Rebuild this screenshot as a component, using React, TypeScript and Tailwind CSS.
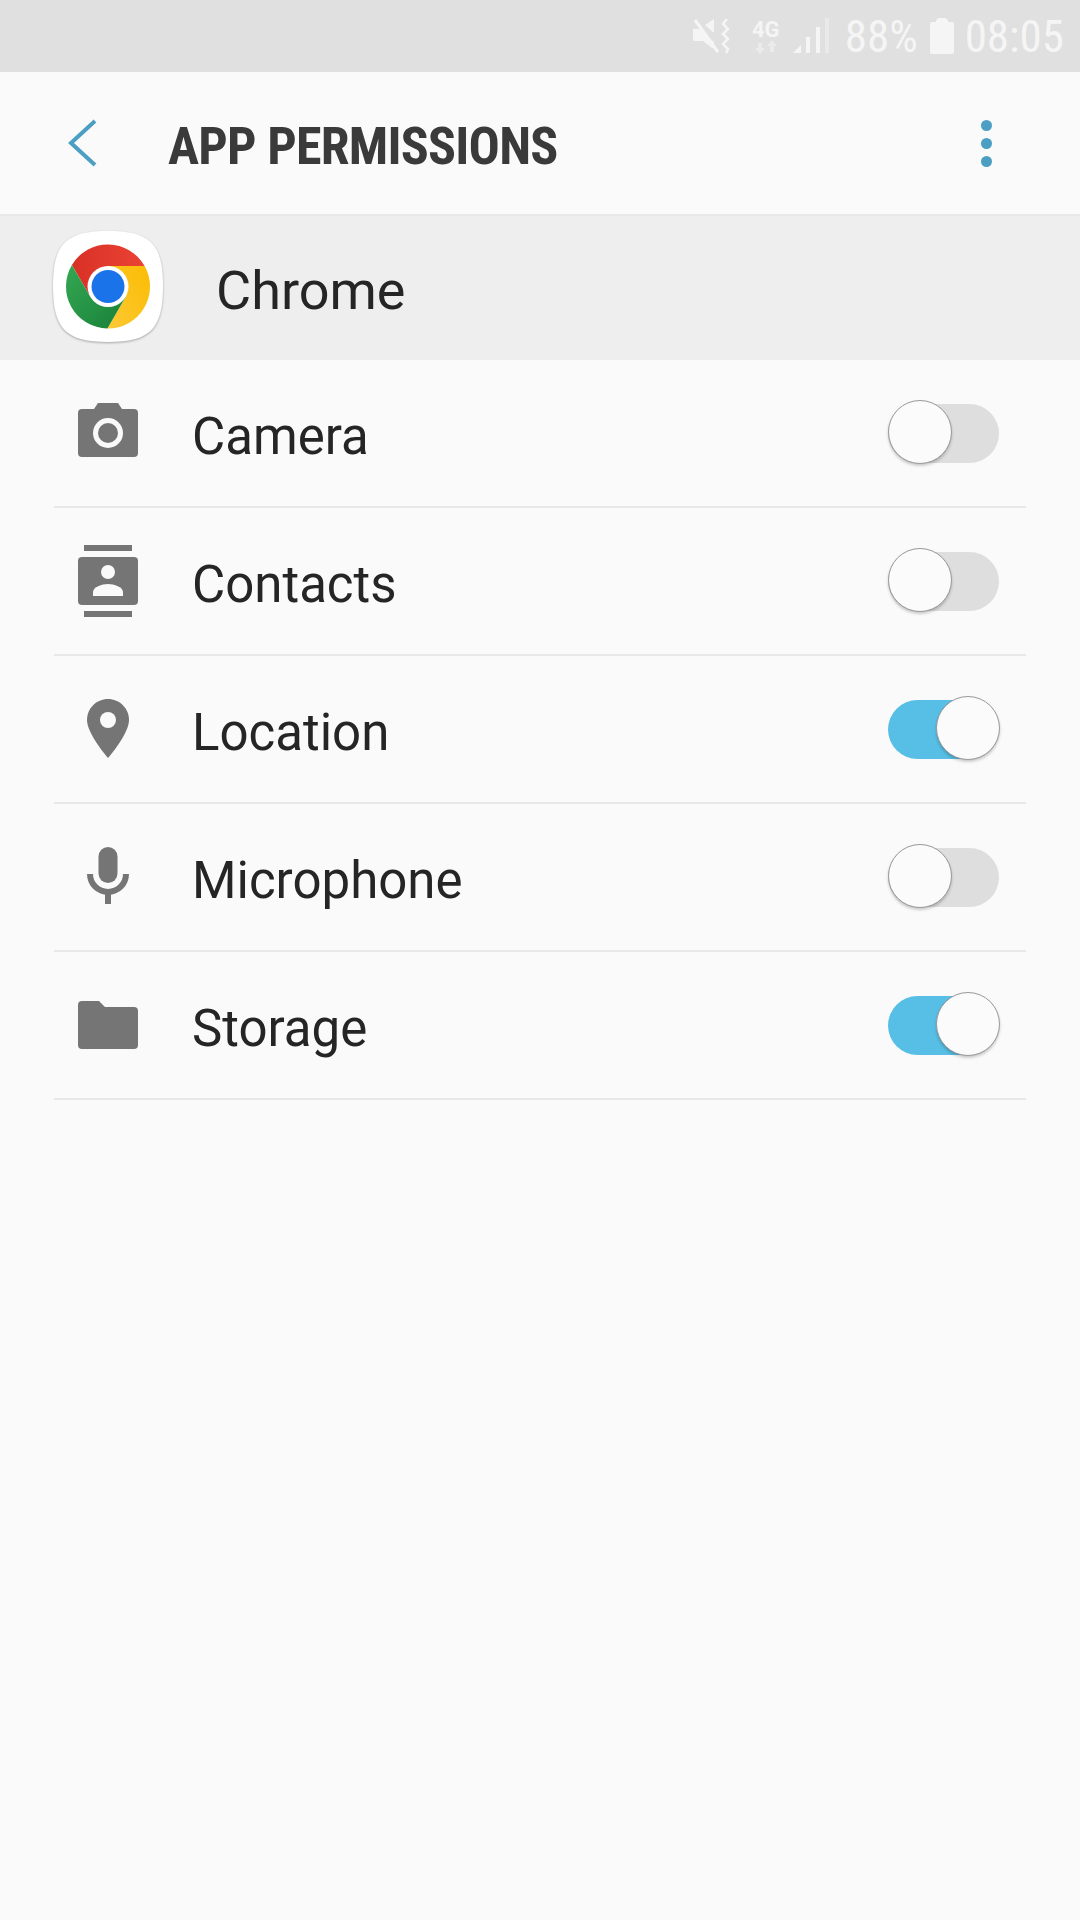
import React from "react";

const rows = [
  { label: "Camera", on: false, icon: <CameraIcon /> },
  { label: "Contacts", on: false, icon: <ContactsIcon /> },
  { label: "Location", on: true, icon: <LocationIcon /> },
  { label: "Microphone", on: false, icon: <MicIcon /> },
  { label: "Storage", on: true, icon: <FolderIcon /> },
];

function IconBox({ children }: { children: React.ReactNode }) {
  return (
    <svg width="60" height="72" viewBox="0 0 60 72" className="shrink-0 fill-[#757575]">
      {children}
    </svg>
  );
}

function CameraIcon() {
  return (
    <IconBox>
      <path d="M20 6H40L44 12H56a4 4 0 0 1 4 4V56a4 4 0 0 1-4 4H4a4 4 0 0 1-4-4V16a4 4 0 0 1 4-4H16Z" />
      <circle cx="30" cy="36" r="15" fill="#fafafa" />
      <circle cx="30" cy="36" r="10" />
    </IconBox>
  );
}

function ContactsIcon() {
  return (
    <IconBox>
      <rect x="6" y="0" width="48" height="6" />
      <rect x="6" y="66" width="48" height="6" />
      <rect x="0" y="12" width="60" height="48" rx="4" />
      <circle cx="30" cy="27" r="7" fill="#fafafa" />
      <path d="M15 51V47C15 42 24 39 30 39C36 39 45 42 45 47V51Z" fill="#fafafa" />
    </IconBox>
  );
}

function LocationIcon() {
  return (
    <IconBox>
      <path d="M30 6C18.4 6 9 15.4 9 27C9 41 30 65 30 65S51 41 51 27C51 15.4 41.6 6 30 6Z" />
      <circle cx="30" cy="27" r="8" fill="#fafafa" />
    </IconBox>
  );
}

function MicIcon() {
  return (
    <IconBox>
      <rect x="20.5" y="6" width="19" height="36" rx="9.5" />
      <path d="M12 33A18 18 0 0 0 48 33" fill="none" stroke="#757575" strokeWidth="6" />
      <rect x="27" y="50" width="6" height="13" />
    </IconBox>
  );
}

function FolderIcon() {
  return (
    <IconBox>
      <path d="M4 12H21L27 18H56a4 4 0 0 1 4 4V56a4 4 0 0 1-4 4H4a4 4 0 0 1-4-4V16a4 4 0 0 1 4-4Z" />
    </IconBox>
  );
}

function Toggle({ on }: { on: boolean }) {
  return (
    <div className="relative h-[59px] w-[111px]">
      <div className={`h-full w-full rounded-full ${on ? "bg-[#57bfe6]" : "bg-[#dedede]"}`} />
      <div
        className={`absolute top-[-4px] h-[64px] w-[64px] rounded-full border border-[#9a9a9a] bg-[#fbfbfb] shadow-[0_2px_3px_rgba(0,0,0,0.2)] ${
          on ? "left-[48px]" : "left-0"
        }`}
      />
    </div>
  );
}

function ChromeLogo() {
  return (
    <svg width="110" height="111" viewBox="0 0 110 111" className="mb-[3px] drop-shadow-[0_1px_1px_rgba(0,0,0,0.3)]">
      <defs>
        <linearGradient id="red" x1="0" y1="0" x2="1" y2="0">
          <stop offset="0" stopColor="#d93025" />
          <stop offset="1" stopColor="#ea4335" />
        </linearGradient>
        <linearGradient id="green" x1="1" y1="1" x2="0" y2="0">
          <stop offset="0" stopColor="#188038" />
          <stop offset="1" stopColor="#34a853" />
        </linearGradient>
        <linearGradient id="yellow" x1="0" y1="1" x2="1" y2="0">
          <stop offset="0" stopColor="#fcc934" />
          <stop offset="1" stopColor="#fbbc04" />
        </linearGradient>
      </defs>
      <path d="M55 0C97 0 110 13 110 55C110 98 97 111 55 111C13 111 0 98 0 55C0 13 13 0 55 0Z" fill="#fff" />
      <g transform="translate(55 55.5)">
        <path d="M-17.75 10.25L-36.08 -21.5A42 42 0 0 1 36.66 -20.5L0 -20.5Z" fill="url(#red)" />
        <path d="M0 -20.5L36.66 -20.5A42 42 0 0 1 -0.58 42L17.75 10.25Z" fill="url(#yellow)" />
        <path d="M17.75 10.25L-0.58 42A42 42 0 0 1 -36.08 -21.5L-17.75 10.25Z" fill="url(#green)" />
        <circle r="20.5" fill="#fff" />
        <circle r="16.5" fill="#1a73e8" />
      </g>
    </svg>
  );
}

function StatusIcons() {
  return (
    <>
      <svg width="38" height="36" viewBox="0 0 38 36" className="fill-[#f5f5f5]">
        <path d="M0 11H6L21 24V30L19 30L10 23H2a2 2 0 0 1-2-2Z" />
        <path d="M12 7L21 1V15Z" />
        <path d="M2 2L25 34" stroke="#f5f5f5" strokeWidth="3" />
        <path d="M34 1L30 6L35 11L30 16L35 21L30 26L35 31L33 35" fill="none" stroke="#f5f5f5" strokeWidth="2.5" />
      </svg>
      <div className="ml-[20px] flex w-[30px] flex-col items-center">
        <span className="text-[22px] leading-[21px] font-bold">4G</span>
        <svg width="24" height="14" viewBox="0 0 24 14" className="fill-[#f0f0f0] opacity-70">
          <path d="M6 14L1 8H4V3H8V8H11L6 14Z" />
          <path d="M18 0L23 6H20V12H16V6H13Z" />
        </svg>
      </div>
      <svg width="36" height="38" viewBox="0 0 36 38" className="mb-[17px] ml-[12px] self-end fill-[#f5f5f5]">
        <path d="M0 36L8 28V36Z" />
        <rect x="13" y="20" width="4" height="16" />
        <rect x="23" y="10" width="4" height="26" />
        <rect x="32" y="1" width="4" height="35" opacity="0.45" />
      </svg>
    </>
  );
}

export default function App() {
  return (
    <div className="flex min-h-[1920px] w-[1080px] flex-col bg-[#fafafa] [font-family:Roboto,sans-serif]">
      {/* Status bar */}
      <div className="flex h-[72px] items-center justify-end bg-[#e0e0e0] pr-[16px] text-[#f5f5f5]">
        <StatusIcons />
        <span className="ml-[16px] text-[45px] leading-none font-normal [font-stretch:75%]">88%</span>
        <div className="ml-[12px] flex flex-col items-center">
          <div className="h-[4px] w-[12px] rounded-t-sm bg-[#f5f5f5]" />
          <div className="h-[32px] w-[24px] rounded-[2px] bg-[#f5f5f5]" />
        </div>
        <span className="ml-[11px] text-[45px] leading-none font-normal [font-stretch:75%]">08:05</span>
      </div>

      {/* Action bar */}
      <header className="flex h-[144px] items-center border-b-[2px] border-[#e8e8e8] pr-[88px] pl-[68px]">
        <svg width="30" height="48" viewBox="0 0 30 48" className="shrink-0">
          <path d="M27 2L3 24L27 46" fill="none" stroke="#4a9fc3" strokeWidth="4" />
        </svg>
        <h1 className="ml-[70px] flex-1 pt-[8px] text-[52px] leading-none font-bold tracking-[-0.75px] text-[#3a3a3a] [font-stretch:75%]">
          APP PERMISSIONS
        </h1>
        <div className="flex flex-col gap-[7px]">
          <div className="h-[11px] w-[11px] rounded-full bg-[#4a9fc3]" />
          <div className="h-[11px] w-[11px] rounded-full bg-[#4a9fc3]" />
          <div className="h-[11px] w-[11px] rounded-full bg-[#4a9fc3]" />
        </div>
      </header>

      {/* App row */}
      <div className="flex h-[144px] items-center bg-[#eeeeee] pl-[53px]">
        <ChromeLogo />
        <span className="ml-[53px] pt-[6px] text-[54px] leading-none text-[#252525]">Chrome</span>
      </div>

      {/* Permission list */}
      <div className="px-[54px]">
        {rows.map((row) => (
          <div key={row.label} className="flex h-[148px] items-center border-b-[2px] border-[#e8e8e8] pr-[27px] pl-[24px]">
            {row.icon}
            <span className="ml-[54px] flex-1 pt-[7px] text-[51px] leading-none text-[#252525]">{row.label}</span>
            <Toggle on={row.on} />
          </div>
        ))}
      </div>
    </div>
  );
}
